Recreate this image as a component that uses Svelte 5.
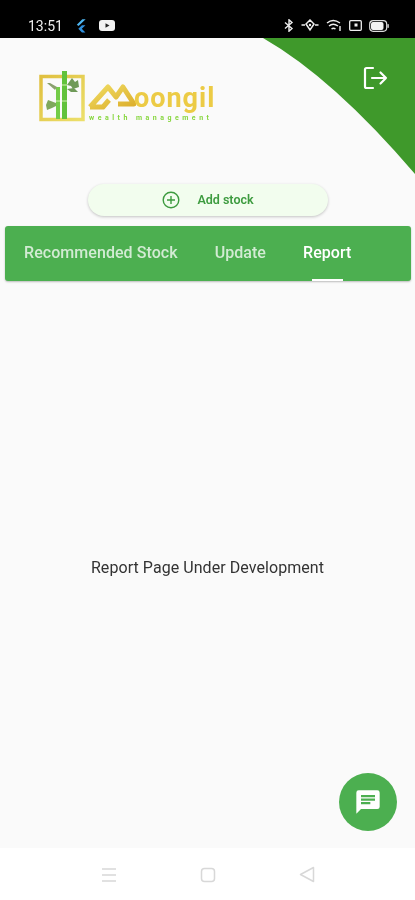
<script>
	const tabs = ['Recommended Stock', 'Update', 'Report'];
	let active = $state(2);
</script>

<div class="screen">
	<div class="status">
		<div class="status-left">
			<span class="time">13:51</span>
			<svg width="11" height="14" viewBox="0 0 12 15">
				<path d="M8 0h3.600L3.800 7.600 2 6z" fill="#4fb6f0" />
				<path d="M7.600 6.600h3.800L7.400 10.600l4 4H7.600l-4-4z" fill="#2f8fdc" />
			</svg>
			<svg width="16" height="11" viewBox="0 0 16 11">
				<rect width="16" height="11" rx="3" fill="#f2f2f2" />
				<path d="M6.500 3.200v4.600l4-2.300z" fill="#222" />
			</svg>
		</div>
		<div class="status-right">
			<svg width="10" height="13" viewBox="0 0 10 13" fill="none" stroke="#eee" stroke-width="1.400">
				<path d="M1 3.500l7 6-3 2.700V.8l3 2.700-7 6" />
			</svg>
			<svg width="18" height="13" viewBox="0 0 18 13" fill="none" stroke="#eee" stroke-width="1.500">
				<path d="M9 1l4 4-4 6-4-6zM0.500 6H4M14 6h3.500" />
				<circle cx="9" cy="6" r="1.200" fill="#eee" stroke="none" />
			</svg>
			<svg width="16" height="13" viewBox="0 0 16 13" fill="none" stroke="#eee" stroke-width="1.400">
				<path d="M1 4q6-5 13 0M3 7q4-3.500 9 0M5.500 10q2-1.500 4 0" />
				<path d="M14 7v5" />
			</svg>
			<svg width="13" height="11" viewBox="0 0 13 11" fill="none" stroke="#eee" stroke-width="1.300">
				<rect x="0.700" y="0.700" width="11.600" height="9.600" rx="1" />
				<rect x="5.500" y="3.500" width="3" height="3" fill="#eee" stroke="none" />
			</svg>
			<svg width="20" height="12" viewBox="0 0 20 12">
				<rect x="0.700" y="0.700" width="17" height="10.600" rx="3.500" fill="none" stroke="#ddd" stroke-width="1.200" />
				<rect x="2" y="2" width="12.500" height="8" rx="2" fill="#f2f2f2" />
				<rect x="18.400" y="4" width="1.400" height="4" rx="0.700" fill="#ddd" />
			</svg>
		</div>
	</div>

	<div class="header">
		<svg class="corner" width="152" height="136" viewBox="0 0 152 136">
			<path d="M0 0H152V136Q70 40 0 0z" fill="#3f992b" />
		</svg>
		<div class="logo">
			<svg class="bamboo" width="47" height="51" viewBox="0 0 47 51">
				<defs>
					<linearGradient id="frame" x1="0" y1="0" x2="1" y2="1">
						<stop offset="0" stop-color="#e0c040" />
						<stop offset="1" stop-color="#ecdf6a" />
					</linearGradient>
				</defs>
				<rect x="2" y="5.500" width="42" height="43" fill="none" stroke="url(#frame)" stroke-width="3.500" />
				<rect x="23" y="0" width="5" height="48" fill="#62c23c" />
				<rect x="17" y="16" width="4" height="32" fill="#74cc48" />
				<path d="M23 14h5M23 30h5M17 30h4" stroke="#d7efb5" stroke-width="1" />
				<path d="M28 14l5-7 3 4 3-2 1 7-6 2-2-3zM28 18l7-1 4 4-7 0z" fill="#6f9a58" />
				<path d="M16 19L8 12l3 0 7 4z" fill="#8aa06e" />
				<path d="M17 32l-8-3-2 5 1 5 5-2 4-2z" fill="#7fa85c" />
			</svg>
			<div class="brand">
				<div class="brand-top">
					<svg width="49" height="28" viewBox="0 0 49 28" fill="none">
						<defs>
							<linearGradient id="gold" x1="0" y1="0" x2="1" y2="1">
								<stop offset="0" stop-color="#f0dc62" />
								<stop offset="1" stop-color="#dcae2c" />
							</linearGradient>
						</defs>
						<path d="M3 25L21 5 29 15 36 5 47 22H31M3 25H16L22 18" stroke="url(#gold)" stroke-width="5" stroke-linejoin="round" />
					</svg>
					<span class="name">oongil</span>
				</div>
				<div class="tagline">wealth management</div>
			</div>
		</div>
		<button class="logout" aria-label="Log out">
			<svg width="26" height="24" viewBox="0 0 26 24" fill="none" stroke="#fff" stroke-width="2.200" stroke-linecap="round" stroke-linejoin="round">
				<path d="M10 2H3.500A1.500 1.500 0 0 0 2 3.500V20.500A1.500 1.500 0 0 0 3.500 22H10" />
				<path d="M9 12H23M17.500 6.500L23 12l-5.500 5.500" />
			</svg>
		</button>
		<button class="add">
			<svg width="18" height="18" viewBox="0 0 18 18" fill="none" stroke="#3d9b3f" stroke-width="1.400">
				<circle cx="9" cy="9" r="7.800" />
				<path d="M9 5v8M5 9h8" />
			</svg>
			<span>Add stock</span>
		</button>
	</div>

	<div class="tabs">
		{#each tabs as tab, i}
			<button class="tab" class:active={active === i} onclick={() => (active = i)}>{tab}</button>
		{/each}
	</div>

	<main class="content">
		<p>Report Page Under Development</p>
		<button class="fab" aria-label="Chat">
			<svg width="28" height="28" viewBox="0 0 24 24">
				<path d="M20 2H4a2 2 0 0 0-2 2v18l4-4h14a2 2 0 0 0 2-2V4a2 2 0 0 0-2-2zM6 9h12v2H6zm8 5H6v-2h8zm4-6H6V6h12z" fill="#fff" />
			</svg>
		</button>
	</main>

	<nav class="nav">
		<svg width="16" height="16" viewBox="0 0 16 16" stroke="#d8d8d8" stroke-width="1.500">
			<path d="M1 2h14M1 8h14M1 14h14" />
		</svg>
		<svg width="16" height="16" viewBox="0 0 16 16" fill="none" stroke="#d8d8d8" stroke-width="1.500">
			<rect x="1.500" y="1.500" width="13" height="13" rx="3" />
		</svg>
		<svg width="16" height="17" viewBox="0 0 16 17" fill="none" stroke="#d8d8d8" stroke-width="1.500" stroke-linejoin="round">
			<path d="M14.500 1.500V15.500L1.500 8.500z" />
		</svg>
	</nav>
</div>

<style>
	:global(body) {
		margin: 0;
		background: #fafafa;
	}
	.screen {
		width: 415px;
		height: 900px;
		display: flex;
		flex-direction: column;
		overflow: hidden;
		font-family: Roboto, 'Liberation Sans', sans-serif;
		background: #fafafa;
		filter: blur(0.4px);
	}
	button {
		font-family: inherit;
		border: none;
		background: none;
		padding: 0;
	}
	.status {
		height: 38px;
		flex: none;
		background: #000;
		display: flex;
		align-items: center;
		justify-content: space-between;
		padding: 13px 26px 0 28px;
		box-sizing: border-box;
		color: #eee;
	}
	.status-left,
	.status-right {
		display: flex;
		align-items: center;
	}
	.status-left {
		gap: 13px;
	}
	.status-right {
		gap: 7px;
	}
	.time {
		font-size: 14px;
		width: 34px;
	}
	.header {
		position: relative;
		height: 188px;
		flex: none;
		box-sizing: border-box;
		padding: 33px 0 0 39px;
	}
	.corner {
		position: absolute;
		top: 0;
		right: 0;
	}
	.logo {
		display: flex;
		align-items: flex-start;
		gap: 1px;
	}
	.brand {
		padding-top: 11px;
	}
	.brand-top {
		display: flex;
		align-items: flex-end;
		height: 28px;
	}
	.name {
		font-size: 27px;
		line-height: 24px;
		font-weight: 700;
		color: #eccb45;
		letter-spacing: 1px;
		margin-left: -2px;
	}
	.tagline {
		margin-top: 4px;
		font-size: 7px;
		line-height: 8px;
		font-weight: 700;
		color: #86d63e;
		letter-spacing: 3.500px;
		margin-left: 2px;
		white-space: nowrap;
	}
	.logout {
		position: absolute;
		top: 28px;
		right: 26px;
		display: flex;
	}
	.add {
		position: absolute;
		left: 88px;
		top: 146px;
		width: 240px;
		height: 32px;
		border-radius: 16px;
		background: #f2fdee;
		box-shadow: 0 1px 3px rgba(0, 0, 0, 0.22);
		display: flex;
		align-items: center;
		justify-content: center;
		gap: 17px;
		box-sizing: border-box;
		color: #3d9b3f;
		font-size: 12.500px;
		font-weight: 600;
	}
	.add span {
		padding-bottom: 2px;
	}
	.tabs {
		margin: 0 4px 0 5px;
		height: 55px;
		flex: none;
		background: #4caf50;
		border-radius: 3px;
		box-shadow: 0 1px 2px rgba(0, 0, 0, 0.25);
		display: flex;
		padding-left: 19px;
		gap: 37px;
	}
	.tab {
		height: 55px;
		padding-bottom: 3px;
		position: relative;
		color: rgba(255, 255, 255, 0.75);
		font-size: 16px;
		font-weight: 500;
		letter-spacing: 0.060px;
	}
	.tab.active {
		color: #fff;
	}
	.tab.active::after {
		content: '';
		position: absolute;
		left: 9px;
		right: 8px;
		bottom: 0;
		height: 2px;
		background: #fff;
	}
	.content {
		flex: 1;
		position: relative;
		display: flex;
		align-items: center;
		justify-content: center;
		padding-top: 6px;
		box-sizing: border-box;
	}
	.content p {
		margin: 0;
		font-size: 16px;
		letter-spacing: 0.060px;
		color: #333;
	}
	.fab {
		position: absolute;
		right: 18px;
		bottom: 17px;
		width: 58px;
		height: 58px;
		border-radius: 50%;
		background: #4caf50;
		display: flex;
		align-items: center;
		justify-content: center;
	}
	.nav {
		height: 52px;
		flex: none;
		background: #fff;
		display: flex;
		align-items: center;
		padding-left: 101px;
		gap: 83px;
		padding-top: 1px;
		box-sizing: border-box;
	}
</style>
